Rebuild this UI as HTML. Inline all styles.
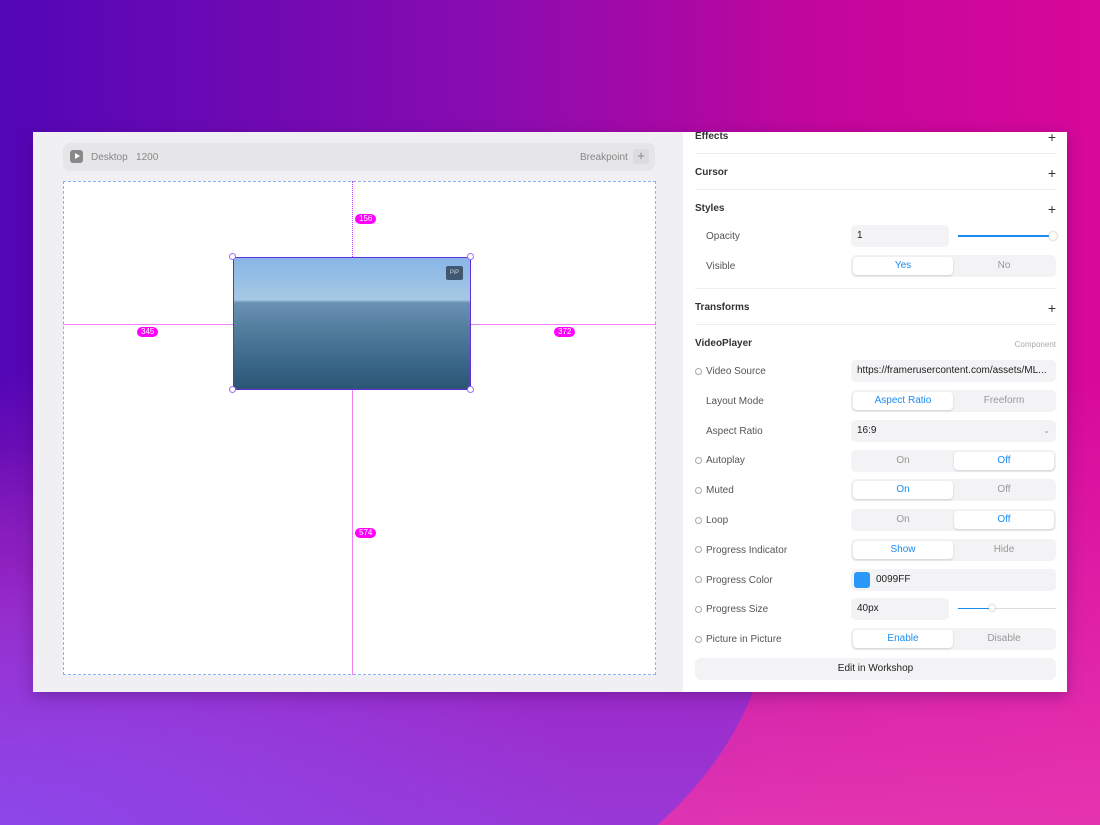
<!DOCTYPE html>
<html><head><meta charset="utf-8"><style>
*{margin:0;padding:0;box-sizing:border-box}
html,body{width:1100px;height:825px;overflow:hidden}
body{position:relative;font-family:"Liberation Sans",sans-serif;
background:linear-gradient(90deg,#5206b6 0%,#8a0cb0 45%,#c4069c 75%,#d8089a 100%);}
.bgw{position:absolute;left:0;top:0;width:1100px;height:825px;overflow:hidden}
.bg3{position:absolute;inset:0;background:linear-gradient(180deg,rgba(0,0,0,0) 45%,rgba(232,60,180,0.85) 100%)}
.circ{position:absolute;left:-390px;top:220px;width:1160px;height:760px;border-radius:50%;
background:linear-gradient(180deg,rgba(130,20,190,0) 30%,rgba(150,44,205,0.9) 62%,#9838d6 80%)}
.circ2{position:absolute;left:0;top:560px;width:600px;height:265px;background:radial-gradient(ellipse at 0% 100%,rgba(140,72,236,0.9) 0%,rgba(140,72,236,0) 70%)}
.win{position:absolute;left:33px;top:132px;width:1034px;height:560px;background:#f0eff1;box-shadow:0 4px 14px rgba(60,0,90,.35)}
.panel{position:absolute;left:650px;top:0;width:384px;height:560px;background:#fff}
.a{position:absolute}
.t{position:absolute;font-size:10px;color:#666;white-space:nowrap}
.h{position:absolute;font-size:10px;color:#333;font-weight:bold;white-space:nowrap}
.plus{position:absolute;right:11px;font-size:14px;color:#333;line-height:10px}
.sep{position:absolute;left:12px;right:11px;height:1px;background:#ececee}
.box{position:absolute;left:168px;width:205px;height:22px;background:#f3f2f4;border-radius:5px;font-size:10px;color:#222;line-height:22px;padding-left:6px}
.seg{position:absolute;left:168px;width:205px;height:22px;background:#f3f2f4;border-radius:5px}
.seg div{position:absolute;top:2px;width:100px;height:18px;font-size:10px;line-height:18px;text-align:center;color:#999}
.seg .on{background:#fff;color:#1a8cf0;border-radius:4px;box-shadow:0 1px 2px rgba(0,0,0,.15)}
.dot{position:absolute;left:12px;width:7px;height:7px;border:1.5px solid #aaa;border-radius:50%}
.lbl{position:absolute;left:23px;font-size:10px;color:#555;white-space:nowrap}
.pill{position:absolute;background:#f0f;color:#fff;font-size:8px;border-radius:6px;padding:0 4px;line-height:10px;height:10px}
.hd{position:absolute;width:7px;height:7px;border:1px solid #a070f0;background:#fff;border-radius:50%}
</style></head><body>
<div class="bgw"><div class="bg3"></div><div class="circ"></div><div class="circ2"></div></div>
<div class="win">
 <div class="a" style="left:30px;top:11px;width:592px;height:28px;background:#e6e5e8;border-radius:7px"></div>
 <div class="a" style="left:37px;top:18px;width:13px;height:13px;background:#888;border-radius:3px"></div>
 <div class="a" style="left:42px;top:21px;width:0;height:0;border-left:5px solid #fff;border-top:3.5px solid transparent;border-bottom:3.5px solid transparent"></div>
 <div class="t" style="left:58px;top:20px;color:#888">Desktop&nbsp;&nbsp;&nbsp;1200</div>
 <div class="t" style="left:547px;top:20px;color:#888">Breakpoint</div>
 <div class="a" style="left:600px;top:17px;width:16px;height:15px;background:#dcdbde;border-radius:3px;color:#888;font-size:13px;line-height:14px;text-align:center">+</div>
 <div class="a" style="left:30px;top:49px;width:593px;height:494px;background:#fff;border:1px dashed #8ab0ff"></div>
 <div class="a" style="left:319px;top:49px;width:0;height:76px;border-left:1px dotted #c040f0"></div>
 <div class="a" style="left:319px;top:258px;width:1px;height:285px;background:#f080f8"></div>
 <div class="a" style="left:30px;top:192px;width:170px;height:1px;background:#f080f8"></div>
 <div class="a" style="left:438px;top:192px;width:185px;height:1px;background:#f080f8"></div>
 <div class="pill" style="left:322px;top:82px">156</div>
 <div class="pill" style="left:104px;top:195px">345</div>
 <div class="pill" style="left:521px;top:195px">372</div>
 <div class="pill" style="left:322px;top:396px">574</div>
 <div class="a" style="left:200px;top:125px;width:238px;height:133px;border:1px solid #6030e0;background:linear-gradient(180deg,#88b6e6 0%,#a6c8e4 32%,#6a92b6 34%,#527c9c 55%,#3a6688 80%,#2c5674 100%)"></div>
 <div class="a" style="left:413px;top:134px;width:17px;height:14px;background:#3e5873;border-radius:2px;color:#ccc;font-size:6px;line-height:14px;text-align:center">PiP</div>
 <div class="hd" style="left:196px;top:121px"></div><div class="hd" style="left:434px;top:121px"></div>
 <div class="hd" style="left:196px;top:254px"></div><div class="hd" style="left:434px;top:254px"></div>
 <div class="panel">
  <div class="h" style="left:12px;top:-1px">Effects</div><div class="plus" style="top:0">+</div>
  <div class="sep" style="top:21px"></div>
  <div class="h" style="left:12px;top:35px">Cursor</div><div class="plus" style="top:36px">+</div>
  <div class="sep" style="top:57px"></div>
  <div class="h" style="left:12px;top:71px">Styles</div><div class="plus" style="top:72px">+</div>
  <div class="lbl" style="top:99px">Opacity</div>
  <div class="box" style="top:93px;width:98px">1</div>
  <div class="a" style="left:275px;top:103px;width:92px;height:2px;background:#1a8cf0"></div>
  <div class="a" style="left:366px;top:100px;width:8px;height:8px;border-radius:50%;background:#fff;box-shadow:0 0 2px #999"></div>
  <div class="lbl" style="top:129px">Visible</div>
  <div class="seg" style="top:123px"><div class="on" style="left:2px">Yes</div><div style="left:103px">No</div></div>
  <div class="sep" style="top:156px"></div>
  <div class="h" style="left:12px;top:170px">Transforms</div><div class="plus" style="top:171px">+</div>
  <div class="sep" style="top:192px"></div>
  <div class="h" style="left:12px;top:206px">VideoPlayer</div>
  <div class="t" style="right:11px;top:208px;font-size:8px;color:#aaa">Component</div>
  <div class="dot" style="top:236px"></div><div class="lbl" style="top:234px">Video Source</div>
  <div class="box" style="top:228px">https://framerusercontent.com/assets/ML...</div>
  <div class="lbl" style="top:264px">Layout Mode</div>
  <div class="seg" style="top:258px"><div class="on" style="left:2px">Aspect Ratio</div><div style="left:103px">Freeform</div></div>
  <div class="lbl" style="top:294px">Aspect Ratio</div>
  <div class="box" style="top:288px">16:9<span style="position:absolute;right:6px;color:#999;font-size:8px">⌄</span></div>
  <div class="dot" style="top:325px"></div><div class="lbl" style="top:323px">Autoplay</div>
  <div class="seg" style="top:318px"><div style="left:2px">On</div><div class="on" style="left:103px">Off</div></div>
  <div class="dot" style="top:355px"></div><div class="lbl" style="top:353px">Muted</div>
  <div class="seg" style="top:347px"><div class="on" style="left:2px">On</div><div style="left:103px">Off</div></div>
  <div class="dot" style="top:385px"></div><div class="lbl" style="top:383px">Loop</div>
  <div class="seg" style="top:377px"><div style="left:2px">On</div><div class="on" style="left:103px">Off</div></div>
  <div class="dot" style="top:414px"></div><div class="lbl" style="top:413px">Progress Indicator</div>
  <div class="seg" style="top:407px"><div class="on" style="left:2px">Show</div><div style="left:103px">Hide</div></div>
  <div class="dot" style="top:444px"></div><div class="lbl" style="top:443px">Progress Color</div>
  <div class="box" style="top:437px;padding-left:25px">0099FF</div>
  <div class="a" style="left:171px;top:440px;width:16px;height:16px;background:#2a98f8;border-radius:3px"></div>
  <div class="dot" style="top:474px"></div><div class="lbl" style="top:472px">Progress Size</div>
  <div class="box" style="top:466px;width:98px">40px</div>
  <div class="a" style="left:275px;top:476px;width:32px;height:1px;background:#1a8cf0"></div>
  <div class="a" style="left:307px;top:476px;width:66px;height:1px;background:#ddd"></div>
  <div class="a" style="left:306px;top:473px;width:6px;height:6px;border-radius:50%;background:#fff;box-shadow:0 0 2px #999"></div>
  <div class="dot" style="top:504px"></div><div class="lbl" style="top:502px">Picture in Picture</div>
  <div class="seg" style="top:496px"><div class="on" style="left:2px">Enable</div><div style="left:103px">Disable</div></div>
  <div class="a" style="left:12px;top:526px;width:361px;height:22px;background:#f3f2f4;border-radius:6px;font-size:10px;color:#222;text-align:center;line-height:22px">Edit in Workshop</div>
 </div>
</div>
</body></html>
